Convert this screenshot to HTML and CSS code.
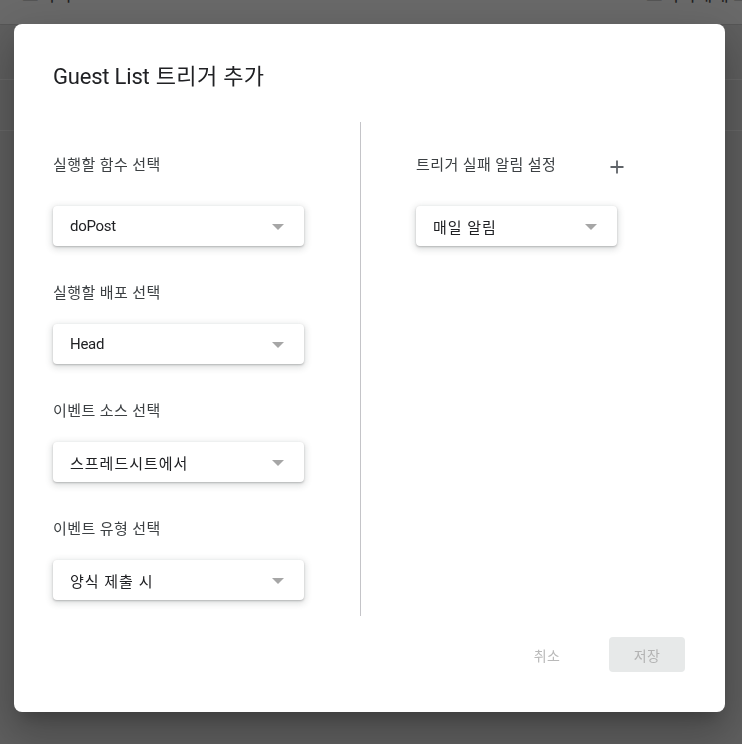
FILE: index.html
```html
<!DOCTYPE html>
<html lang="ko">
<head>
<meta charset="utf-8">
<title>Guest List 트리거 추가</title>
<link rel="stylesheet" href="styles.css">
</head>
<body>
<div class="page">
  <header class="topbar">
    <span class="crumb">트리거</span>
    <span class="crumb-right">트리거에게 표시</span>
  </header>
  <div class="row row-a"></div>
  <div class="row row-b"></div>
</div>
<div class="scrim">
  <div class="dialog" role="dialog">
    <h1 class="title">Guest List <span class="ko-title">트리거 추가</span></h1>
    <div class="body">
      <div class="col col-left">
        <div class="field field-first">
          <div class="label">실행할 함수 선택</div>
          <div class="select"><span class="value">doPost</span><span class="caret"></span></div>
        </div>
        <div class="field">
          <div class="label">실행할 배포 선택</div>
          <div class="select"><span class="value">Head</span><span class="caret"></span></div>
        </div>
        <div class="field">
          <div class="label">이벤트 소스 선택</div>
          <div class="select"><span class="value ko">스프레드시트에서</span><span class="caret"></span></div>
        </div>
        <div class="field">
          <div class="label">이벤트 유형 선택</div>
          <div class="select"><span class="value ko">양식 제출 시</span><span class="caret"></span></div>
        </div>
      </div>
      <div class="col col-right">
        <div class="label-row">
          <span class="label">트리거 실패 알림 설정</span>
          <svg class="plus" width="14" height="14" viewBox="0 0 14 14"><path d="M7 0.5v13M0.5 7h13" stroke="#5f6368" stroke-width="1.8" fill="none"/></svg>
        </div>
        <div class="select select-narrow"><span class="value ko">매일 알림</span><span class="caret"></span></div>
      </div>
    </div>
    <div class="footer">
      <button class="btn btn-cancel">취소</button>
      <button class="btn btn-save">저장</button>
    </div>
  </div>
</div>
</body>
</html>
```
FILE: styles.css
```css
* { box-sizing: border-box; }
html, body { margin: 0; padding: 0; }
body {
  width: 742px;
  height: 744px;
  overflow: hidden;
  background: #5f5f5f;
  font-family: Roboto, "Noto Sans CJK KR", sans-serif;
}
.page { height: 744px; }
.topbar {
  height: 25px;
  background: #6a6a6a;
  border-bottom: 1px solid #575757;
  display: flex;
  justify-content: space-between;
  overflow: hidden;
  font-size: 18px;
  line-height: 18px;
  color: #1d1d1d;
}
.crumb { margin: -14px 0 0 22px; }
.crumb-right { margin: -14px -10px 0 0; width: 106px; white-space: nowrap; }
.row { border-bottom: 1px solid #686868; }
.row-a { height: 55px; }
.row-b { height: 51px; }

.scrim { position: fixed; inset: 0; }
.dialog {
  position: absolute;
  left: 14px;
  top: 24px;
  width: 711px;
  height: 688px;
  background: #fff;
  border-radius: 8px;
  padding: 39px 40px 40px 39px;
  display: flex;
  flex-direction: column;
  box-shadow: 0 11px 15px -7px rgba(0,0,0,.2), 0 24px 38px 3px rgba(0,0,0,.14), 0 9px 46px 8px rgba(0,0,0,.12);
}
.title {
  margin: 0 0 31px;
  font-size: 22px;
  line-height: 28px;
  font-weight: 400;
  color: #202124;
  letter-spacing: -0.2px;
}
.ko-title { letter-spacing: 0.3px; margin-left: 1px; }
.body {
  display: flex;
  height: 494px;
}
.col-left {
  width: 308px;
  border-right: 1px solid #c4c4c8;
  padding-top: 33px;
  display: flex;
  flex-direction: column;
  gap: 37px;
}
.col-right {
  padding: 33px 0 0 55px;
  display: flex;
  flex-direction: column;
}
.label {
  font-size: 15px;
  line-height: 20px;
  color: #3c4043;
  letter-spacing: 0.4px;
  margin-bottom: 21px;
  display: block;
}
.field-first .label,
.label-row .label { margin-bottom: 31px; }
.label-row {
  width: 208px;
  display: flex;
  justify-content: space-between;
}
.plus { margin-top: 5px; }
.select {
  width: 251px;
  height: 40px;
  border-radius: 4px;
  background: #fff;
  display: flex;
  align-items: center;
  justify-content: space-between;
  padding: 0 20px 0 17px;
  font-size: 15px;
  color: #202124;
  box-shadow: 0 1px 2px 0 rgba(60,64,67,.3), 0 2px 6px 2px rgba(60,64,67,.15);
}
.select-narrow { width: 201px; }
.value { letter-spacing: -0.3px; }
.value.ko { letter-spacing: 1px; }
.caret {
  width: 0;
  height: 0;
  border-left: 6px solid transparent;
  border-right: 6px solid transparent;
  border-top: 6px solid #a6a6a6;
  margin-top: 2px;
}
.footer {
  margin-top: 21px;
  display: flex;
  justify-content: flex-end;
  gap: 24px;
}
.btn {
  font-family: Roboto, "Noto Sans CJK KR", sans-serif;
  font-size: 14px;
  height: 35px;
  width: 76px;
  border: 0;
  border-radius: 4px;
  background: transparent;
  color: #b9b9b9;
  padding: 0;
  letter-spacing: 0.3px;
}
.btn-save { background: #e7e9e9; color: #b3b3b3; }
```
